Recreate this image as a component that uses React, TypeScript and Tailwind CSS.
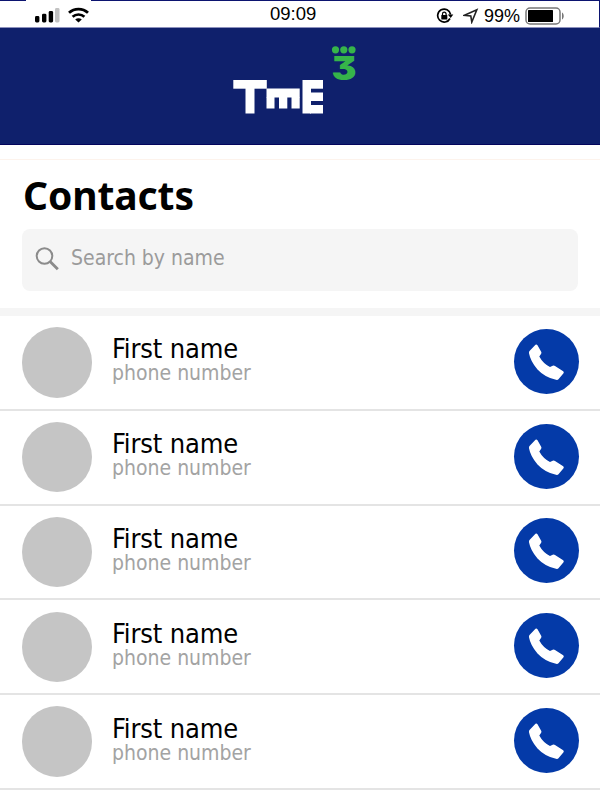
interface Contact {
  id: number;
  name: string;
  phone: string;
}

const contacts: Contact[] = [
  { id: 1, name: "First name", phone: "phone number" },
  { id: 2, name: "First name", phone: "phone number" },
  { id: 3, name: "First name", phone: "phone number" },
  { id: 4, name: "First name", phone: "phone number" },
  { id: 5, name: "First name", phone: "phone number" },
];

const StatusBar = () => (
  <div className="relative flex h-7 shrink-0 items-center justify-between border-t border-r border-b border-t-[#0c1470] border-r-[#0c1470] border-b-[#8d91bd] bg-white pl-[34px] pr-[34px] font-['Liberation_Sans',sans-serif] text-[18px] text-black">
    {/* Gap in the top line above the signal icons */}
    <div className="absolute -top-px left-[26px] h-px w-[65px] bg-white" />
    <div className="mt-0.5 flex items-center gap-[8px]">
      <svg width="26" height="16" viewBox="0 0 26 16">
        <rect x="1" y="9" width="4.4" height="6.5" rx="1.4" />
        <rect x="8" y="6.7" width="4.4" height="8.8" rx="1.4" />
        <rect x="14.7" y="4" width="4.4" height="11.5" rx="1.4" />
        <rect x="21" y="1" width="4.5" height="14.5" rx="1.4" fill="#c2c2c2" />
      </svg>
      <svg width="21" height="16" viewBox="0 0 21 16" fill="none" stroke="#000">
        <path d="M1 5.8c5.3-5 13.7-5 19 0" strokeWidth="2.8" />
        <path d="M4.6 9.8c3.3-3.1 8.5-3.1 11.8 0" strokeWidth="2.7" />
        <path d="M10.5 15.5 7.2 12.5c1.900-1.600 4.700-1.600 6.600 0Z" fill="#000" stroke="none" />
      </svg>
    </div>
    <span className="absolute left-[270px] top-[1px] h-6 text-[18.5px] leading-6">09:09</span>
    <div className="mt-1 flex items-center">
      <svg className="-ml-1" width="18" height="16" viewBox="0 0 18 16" fill="none" stroke="#000" strokeWidth="1.7">
        <path d="M14 10.500A6.500 6.500 0 1 1 14.600 6.500" />
        <path d="M11.800 6.500h5.500l-2.600 3.500Z" fill="#000" stroke="none" />
        <rect x="5.300" y="7" width="6" height="4.600" rx=".5" fill="#000" stroke="none" />
        <path d="M6.500 7.500V6a1.800 1.800 0 0 1 3.600 0v1.500" strokeWidth="1.200" />
      </svg>
      <svg className="ml-[9px]" width="16" height="16" viewBox="0 0 16 16" fill="none" stroke="#222" strokeWidth="1.600">
        <path d="M1.500 7.300 13.800 1.800 8.800 14 7.800 8Z" />
      </svg>
      <span className="ml-[5px] w-9 leading-6">99%</span>
      <svg className="ml-[5px]" width="40" height="18" viewBox="0 0 40 18">
        <rect x="1" y="1" width="34" height="16" rx="4" fill="none" stroke="#777" strokeWidth="1.5" />
        <rect x="3" y="3" width="25" height="12" rx=".6" />
        <path d="M37 5.5c2.3 1.2 2.3 5.8 0 7Z" fill="#777" />
      </svg>
    </div>
  </div>
);

const Logo = () => (
  <svg width="124" height="70" viewBox="0 0 124 70">
    <g fill="#fff">
      <rect x="0.3" y="35" width="33.5" height="8.7" />
      <rect x="12.5" y="43" width="9" height="25.5" />
      <rect x="33.5" y="43.5" width="33.2" height="9" />
      <rect x="33.5" y="52" width="8" height="11.5" />
      <rect x="46" y="52" width="8.3" height="11.5" />
      <rect x="58.5" y="52" width="8.2" height="11.5" />
      <rect x="69.5" y="35" width="8.5" height="33.5" />
      <rect x="77" y="35" width="13" height="8.7" />
      <rect x="77" y="47.5" width="13" height="8.5" />
      <rect x="77" y="60" width="13" height="8.5" />
    </g>
    <g fill="#36b44a">
      <circle cx="102.5" cy="4.800" r="3.6" />
      <circle cx="110.8" cy="4.800" r="3.6" />
      <circle cx="119" cy="4.800" r="3.6" />
      <text
        x="98.5"
        y="34.5"
        fontSize="33"
        fontWeight="900"
        textLength="25"
        lengthAdjust="spacingAndGlyphs"
        className="font-['Inter',sans-serif] [font-feature-settings:'cv09']"
      >
        3
      </text>
    </g>
  </svg>
);

const ContactRow = ({ contact }: { contact: Contact }) => (
  <li className="flex h-[94.8px] items-center border-b-[2.5px] border-[#e4e4e4] pl-[21.5px] pr-[21px]">
    <div className="size-[70.5px] shrink-0 rounded-full bg-[#c5c5c5]" />
    <div className="-mt-[5px] ml-5 flex-1 font-['DejaVu_Sans_Condensed','DejaVu_Sans',sans-serif] font-stretch-condensed">
      <p className="text-[27px] leading-[27px] tracking-[-0.15px] text-black">{contact.name}</p>
      <p className="text-[21px] leading-[22px] text-[#a3a3a3]">{contact.phone}</p>
    </div>
    <button className="-mt-0.5 flex size-[65px] items-center justify-center rounded-full bg-[#043aa8]">
      <svg width="65" height="65" viewBox="0 0 65 65" fill="#fff">
        <path d="M15.500 22 21.500 15.700Q22.700 15 23.500 16.200L27.300 23Q27.700 24 27 25L25.300 27.500Q29 34.500 36 38L38.700 36.800Q40 36.300 41 37L49.200 42.200Q50.300 43 49.500 44.200L44.700 50Q43.800 51.200 42 50.800Q31 48.500 23.500 40.500Q16.500 32.500 15 24.300Q14.800 23 15.500 22Z" />
      </svg>
    </button>
  </li>
);

const App = () => {
  return (
    <div className="flex h-[800px] w-[600px] flex-col overflow-hidden bg-white font-['Noto_Sans',sans-serif]">
      <StatusBar />
      <header className="h-[117px] shrink-0 border-b border-[#03045c] bg-[#0f206c] pl-[233px] pt-[17px]">
        <Logo />
      </header>
      <section className="mt-[14px] h-[149px] shrink-0 border-t border-[#fdf3ec] px-[22px] pt-3">
        <h1 className="ml-px h-[57px] text-[39px] font-bold leading-[46px] tracking-[-0.1px] text-black">Contacts</h1>
        <div className="flex h-[62px] items-center rounded-lg bg-[#f5f5f5] pl-[13px]">
          <svg className="-mt-0.5" width="25" height="25" viewBox="0 0 25 25" fill="none" stroke="#8b8b8b">
            <circle cx="9.5" cy="9" r="7.8" strokeWidth="2" />
            <path d="m15.3 14.8 7.5 7.5" strokeWidth="2.8" />
          </svg>
          <span className="-mt-0.5 ml-[11px] font-['DejaVu_Sans_Condensed','DejaVu_Sans',sans-serif] text-[21px] text-[#9b9b9b] font-stretch-condensed">
            Search by name
          </span>
        </div>
      </section>
      <div className="h-2 shrink-0 bg-[#f5f5f5]" />
      <ul className="shrink-0">
        {contacts.map((contact) => (
          <ContactRow key={contact.id} contact={contact} />
        ))}
      </ul>
    </div>
  );
};

export default App;
